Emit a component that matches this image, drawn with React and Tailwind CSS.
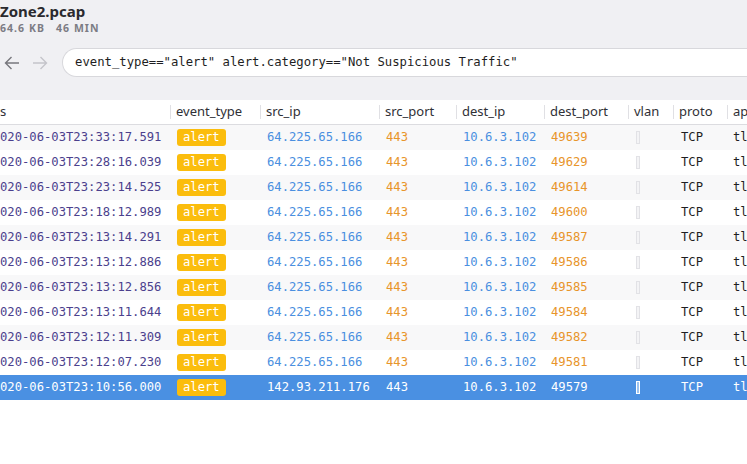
import { useState } from "react";

const rows = [
  ["020-06-03T23:33:17.591", "64.225.65.166", "443", "10.6.3.102", "49639"],
  ["020-06-03T23:28:16.039", "64.225.65.166", "443", "10.6.3.102", "49629"],
  ["020-06-03T23:23:14.525", "64.225.65.166", "443", "10.6.3.102", "49614"],
  ["020-06-03T23:18:12.989", "64.225.65.166", "443", "10.6.3.102", "49600"],
  ["020-06-03T23:13:14.291", "64.225.65.166", "443", "10.6.3.102", "49587"],
  ["020-06-03T23:13:12.886", "64.225.65.166", "443", "10.6.3.102", "49586"],
  ["020-06-03T23:13:12.856", "64.225.65.166", "443", "10.6.3.102", "49585"],
  ["020-06-03T23:13:11.644", "64.225.65.166", "443", "10.6.3.102", "49584"],
  ["020-06-03T23:12:11.309", "64.225.65.166", "443", "10.6.3.102", "49582"],
  ["020-06-03T23:12:07.230", "64.225.65.166", "443", "10.6.3.102", "49581"],
  ["020-06-03T23:10:56.000", "142.93.211.176", "443", "10.6.3.102", "49579"],
];

const cols = "grid grid-cols-[170px_90px_119px_77px_88px_84px_45px_54px_1fr]";

function HeadCell({ label, first }) {
  return (
    <div className="relative flex items-center h-full pl-[6px] overflow-hidden">
      {!first && <span className="absolute left-0 top-[5px] bottom-[5px] w-px bg-[#e0e0e4]" />}
      <span className={first ? "-ml-[6px]" : ""}>{label}</span>
    </div>
  );
}

function App() {
  const [selected, setSelected] = useState(10);

  return (
    <div className="w-[747px] h-[464px] overflow-hidden bg-white font-['Noto_Sans',sans-serif]">
      {/* Top bar */}
      <div className="bg-[#f0f0f3] h-[100px] flex flex-col">
        <div className="text-[15px] font-bold text-[#2a2a2e] leading-5 mt-[1px]">Zone2.pcap</div>
        <div className="text-[10.5px] font-bold tracking-[0.1em] text-[#7c7c84] leading-3 mt-[1px] flex gap-[11px]">
          <span>64.6 KB</span>
          <span>46 MIN</span>
        </div>
        <div className="flex items-center mt-[14px]">
          <div className="flex items-center gap-[12px] pl-[4px] pr-[14px]">
            <svg width="16" height="16" viewBox="0 0 16 16" fill="none" stroke="#77777d" strokeWidth="1.4">
              <path d="M15 8H1.5M7.5 2L1.5 8l6 6" />
            </svg>
            <svg width="16" height="16" viewBox="0 0 16 16" fill="none" stroke="#c4c4ca" strokeWidth="1.4">
              <path d="M1 8h13.5M8.5 2l6 6-6 6" />
            </svg>
          </div>
          <div className="flex-1 h-[29px] rounded-l-full bg-white border border-r-0 border-[#d8d8dc] flex items-center pl-[12px]">
            <span className="font-['DejaVu_Sans_Mono',monospace] text-[12.25px] text-[#1e1e22] whitespace-nowrap">
              event_type=="alert" alert.category=="Not Suspicious Traffic"
            </span>
          </div>
        </div>
      </div>

      {/* Table header */}
      <div className={`${cols} h-[25px] text-[13px] text-[#303036] bg-white border-b border-[#dcdce0] shadow-[0_1px_2px_rgba(0,0,0,0.05)]`}>
        <HeadCell label="s" first />
        <HeadCell label="event_type" />
        <HeadCell label="src_ip" />
        <HeadCell label="src_port" />
        <HeadCell label="dest_ip" />
        <HeadCell label="dest_port" />
        <HeadCell label="vlan" />
        <HeadCell label="proto" />
        <HeadCell label="app" />
      </div>

      {/* Rows */}
      <div className="font-['DejaVu_Sans_Mono',monospace] text-[12.2px]">
        {rows.map((r, i) => {
          const sel = i === selected;
          const bg = sel ? "bg-[#4a90e2]" : i % 2 === 0 ? "bg-[#f8f8f9]" : "bg-white";
          return (
            <div
              key={i}
              onClick={() => setSelected(i)}
              className={`${cols} h-[25px] items-center whitespace-nowrap ${bg}`}
            >
              <div className={sel ? "text-white" : "text-[#4b3f8d]"}>{r[0]}</div>
              <div className="pl-[7px]">
                <span className="inline-flex items-center h-[17px] px-[6px] rounded-[3px] bg-[#fbbd0d] text-white font-['DejaVu_Sans_Mono',monospace]">
                  alert
                </span>
              </div>
              <div className={`pl-[7px] ${sel ? "text-white" : "text-[#4a8fe0]"}`}>{r[1]}</div>
              <div className={`pl-[7px] ${sel ? "text-white" : "text-[#e8952a]"}`}>{r[2]}</div>
              <div className={`pl-[7px] ${sel ? "text-white" : "text-[#4a8fe0]"}`}>{r[3]}</div>
              <div className={`pl-[7px] ${sel ? "text-white" : "text-[#e8952a]"}`}>{r[4]}</div>
              <div className="pl-[8px] flex items-center">
                <span className={`block w-[4px] h-[13px] border ${sel ? "border-white bg-[#9cc3f0]" : "border-[#e2e2e6] bg-[#f4f4f6]"}`} />
              </div>
              <div className={`pl-[8px] ${sel ? "text-white" : "text-[#1e1e22]"}`}>TCP</div>
              <div className={`pl-[6px] overflow-hidden ${sel ? "text-white" : "text-[#1e1e22]"}`}>tls</div>
            </div>
          );
        })}
      </div>
    </div>
  );
}

export default App;
